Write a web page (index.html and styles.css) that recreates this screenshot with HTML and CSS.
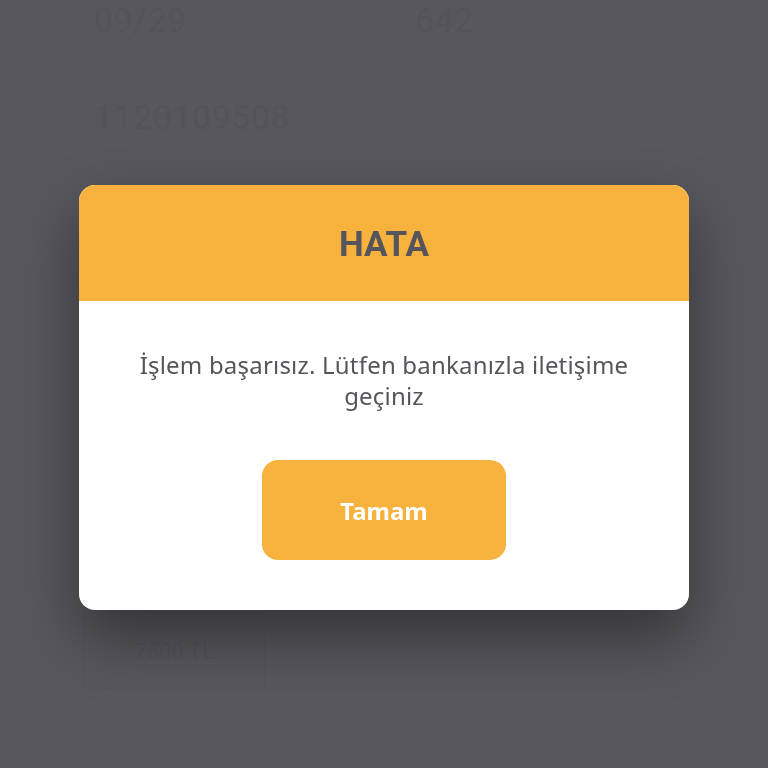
FILE: index.html
```html
<!DOCTYPE html>
<html lang="tr">
<head>
  <meta charset="UTF-8" />
  <meta name="viewport" content="width=device-width, initial-scale=1.0"/>
  <title>Ödeme</title>
  <link rel="stylesheet" href="styles.css">
</head>
<body>
  <div id="card-info">
    <div class="row">
      <span class="field date">09/29</span>
      <span class="field cvv">642</span>
    </div>
    <div class="row">
      <span class="field">1120109508</span>
    </div>
    <div class="amount">7500 TL</div>
  </div>

  <div id="overlay">
    <div class="modal">
      <div class="modal-head">HATA</div>
      <div class="modal-body">
        <p class="message">İşlem başarısız. Lütfen bankanızla iletişime geçiniz</p>
        <button class="ok-btn">Tamam</button>
      </div>
    </div>
  </div>
</body>
</html>
```

FILE: styles.css
```css
body {
  background: #58575d;
  margin: 0;
  font-family: "Noto Sans", "Open Sans", sans-serif;
  height: 768px;
  overflow: hidden;
}
#card-info {
  padding: 0 0 0 94px;
  color: #54535a;
  font-family: "Roboto", sans-serif;
  font-size: 34px;
}
.row {
  display: flex;
  height: 97px;
  align-items: flex-start;
}
.field {
  margin-top: 0;
  letter-spacing: 0.5px;
}
.date {
  width: 321px;
}
.amount {
  margin: 419px 0 0 -11px;
  width: 182px;
  height: 76px;
  border: 1px solid #555459;
  box-sizing: border-box;
  font-size: 22px;
  display: flex;
  align-items: center;
  justify-content: center;
}

#overlay {
  position: fixed;
  inset: 0;
  display: flex;
  justify-content: center;
  padding-top: 185px;
  box-sizing: border-box;
}
.modal {
  width: 610px;
  height: 425px;
  background: white;
  border-radius: 16px;
  overflow: hidden;
  box-shadow: 0 28px 60px rgba(0, 0, 0, 0.4);
  display: flex;
  flex-direction: column;
}
.modal-head {
  background: #f7b23d;
  height: 116px;
  display: flex;
  align-items: center;
  justify-content: center;
  font-family: "Roboto", sans-serif;
  font-weight: bold;
  font-size: 35px;
  color: #56555b;
  padding-top: 2px;
  box-sizing: border-box;
}
.modal-body {
  display: flex;
  flex-direction: column;
  align-items: center;
}
.message {
  margin: 48px 40px 0;
  text-align: center;
  font-size: 24px;
  letter-spacing: 0.2px;
  line-height: 31px;
  color: #56555b;
}
.ok-btn {
  margin-top: 49px;
  width: 244px;
  height: 100px;
  border: none;
  border-radius: 16px;
  background: #f7b23d;
  color: white;
  font-family: "Noto Sans", sans-serif;
  font-weight: bold;
  font-size: 24px;
}
```
